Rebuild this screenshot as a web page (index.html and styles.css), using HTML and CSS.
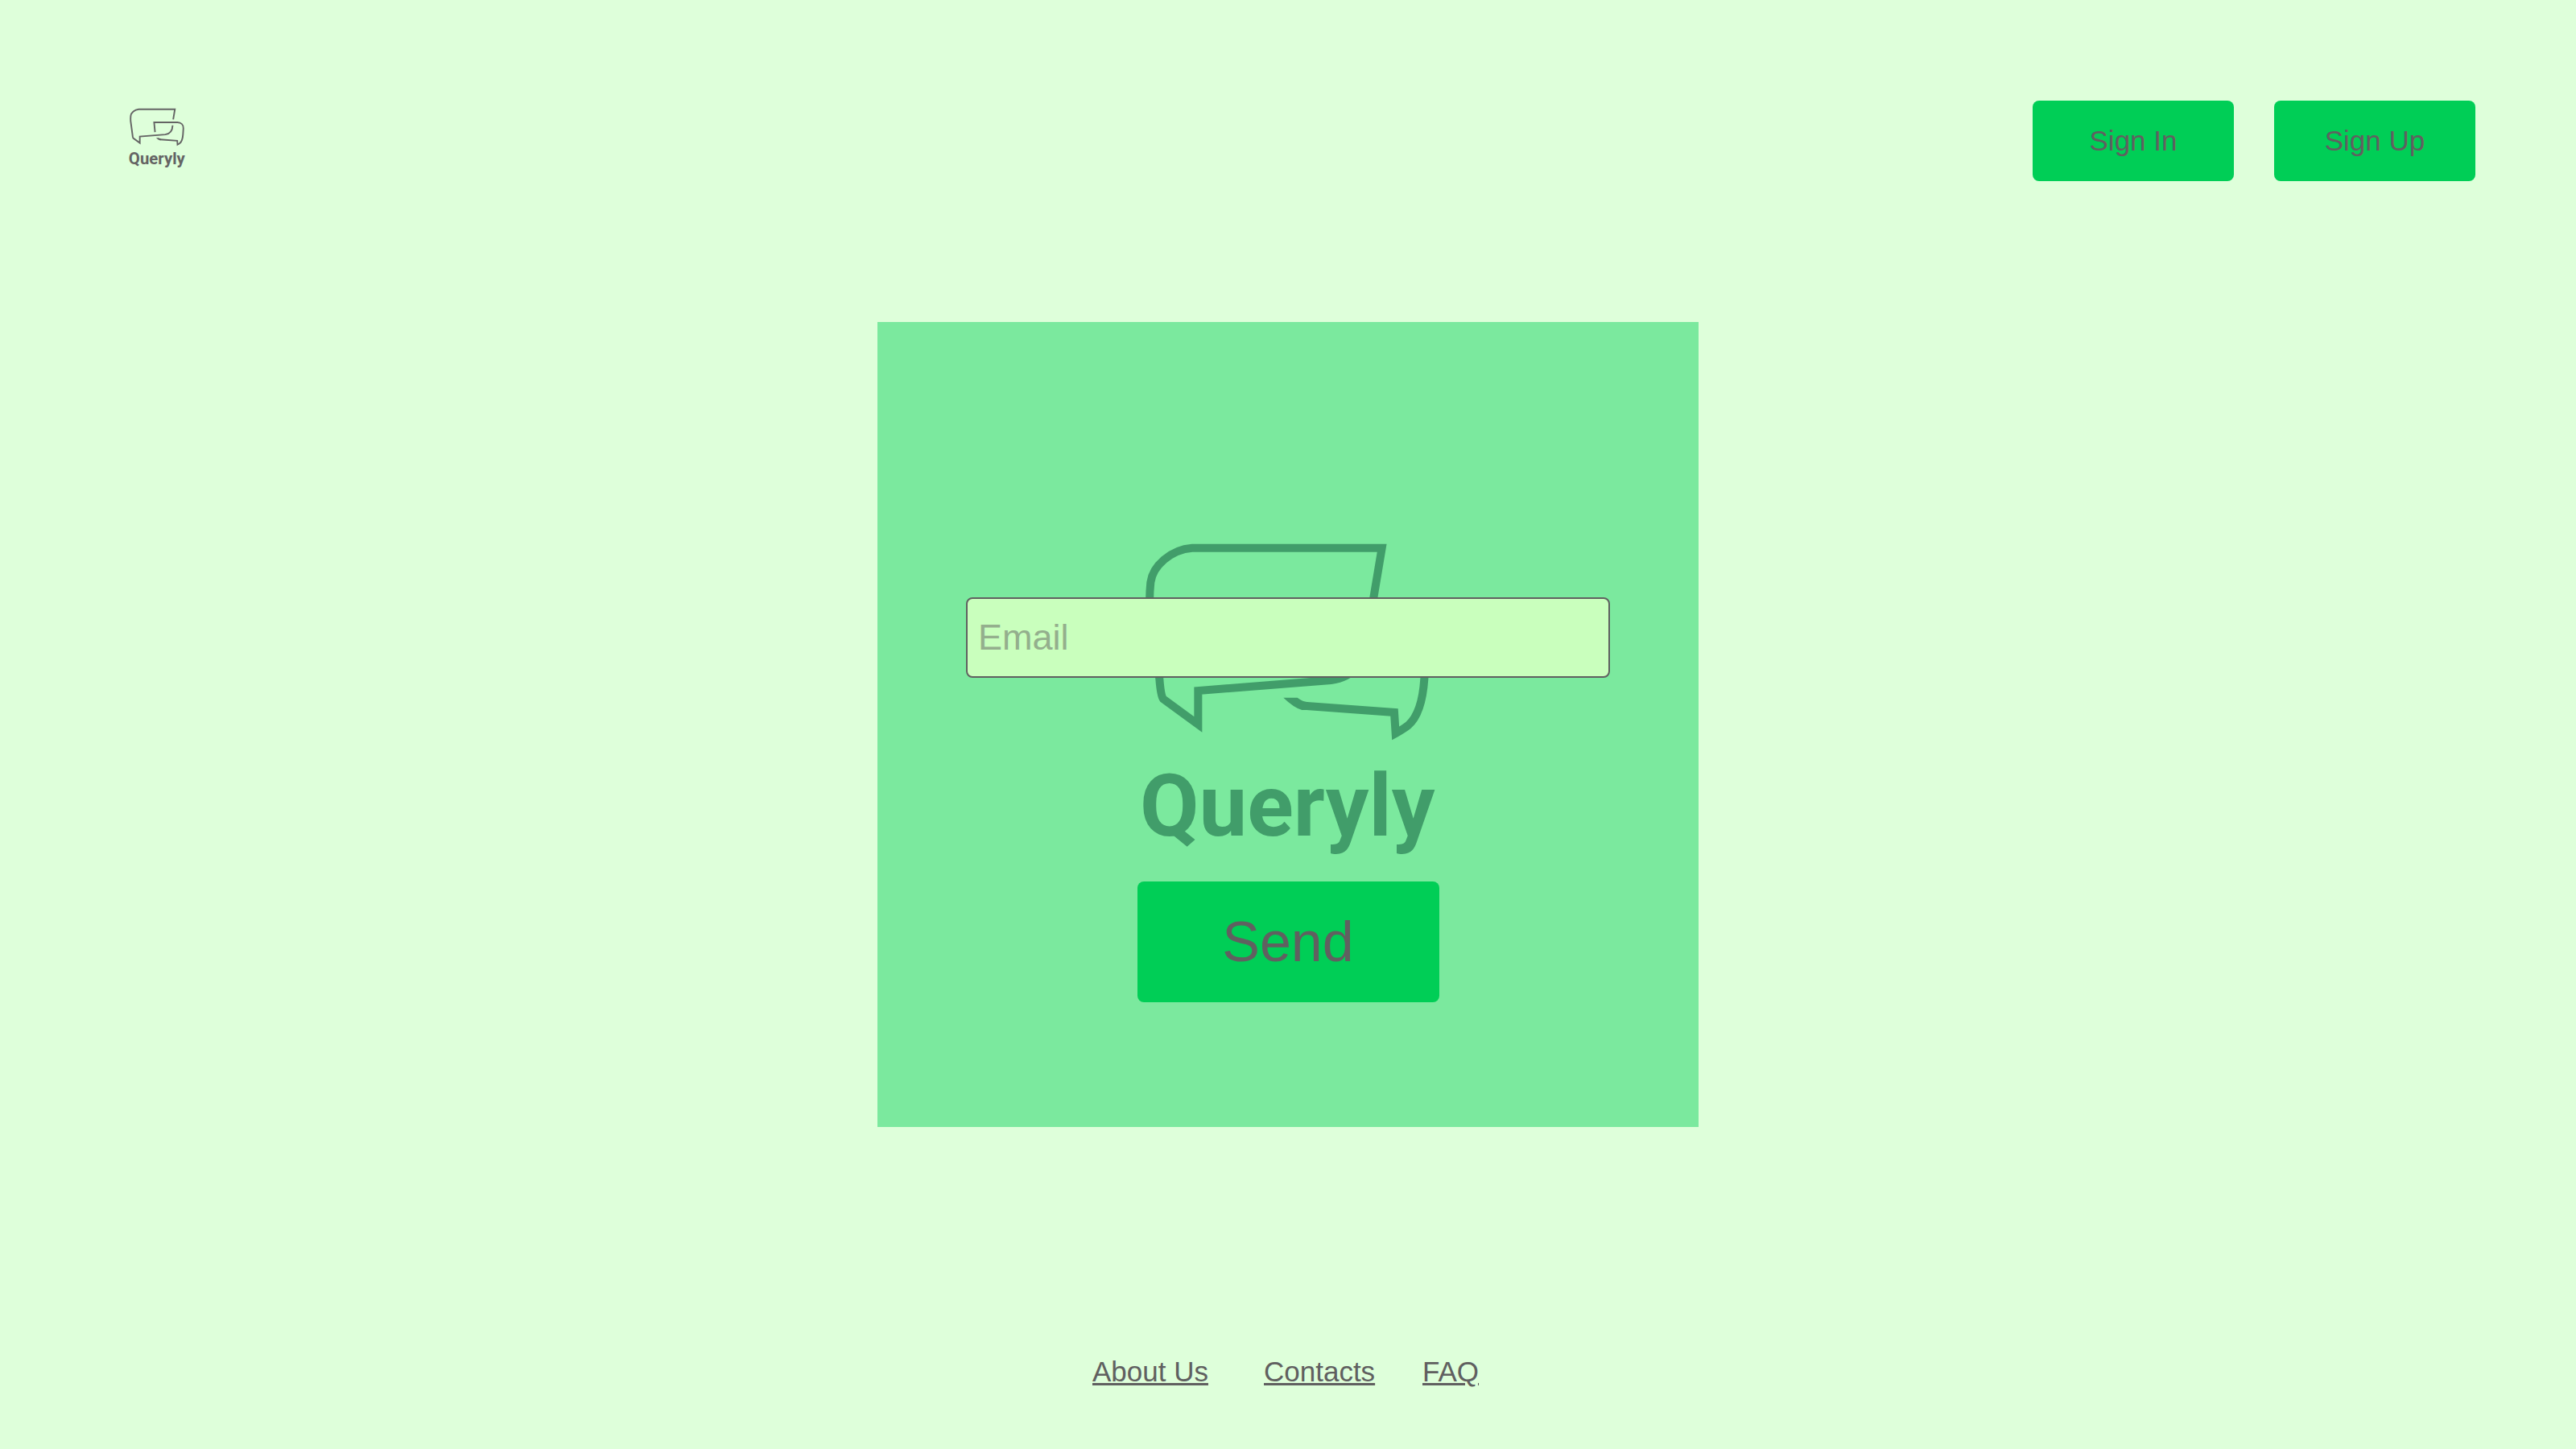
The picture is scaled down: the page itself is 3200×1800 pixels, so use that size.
FILE: index.html
```html
<!DOCTYPE html>
<html lang="en">
<head>
<meta charset="utf-8">
<meta name="viewport" content="width=device-width, initial-scale=1">
<title>Queryly</title>
<link rel="stylesheet" href="styles.css">
</head>
<body>
<header class="header">
  <a class="brand" href="#" aria-label="Queryly home">
    <svg class="logo" viewBox="0 0 1320 1320" aria-hidden="true">
      <g class="logo-lines">
        <path d="M977 319L1010 122H303C222 128 156 190 148 250Q142 310 146 350L181 610C184 650 187 673 195 685L325 780V654L820 615C900 605 962 545 966 435"/>
        <path d="M622 567L604 377H1060C1130 382 1180 425 1175 495L1168 610C1162 700 1140 755 1108 783Q1090 797 1061 813L1056 735L720 710"/>
      </g>
      <path class="logo-tip" d="M643 680H695Q715 695 735 697V726H712Q680 716 643 680Z"/>
      <text class="logo-name" x="108" y="1193">Queryly</text>
    </svg>
  </a>
  <nav class="account">
    <button class="button" type="button">Sign In</button>
    <button class="button" type="button">Sign Up</button>
  </nav>
</header>
<main class="card">
  <svg class="logo card-logo" viewBox="0 0 1320 1320" aria-hidden="true">
    <g class="logo-lines">
      <path d="M977 319L1010 122H303C222 128 156 190 148 250Q142 310 146 350L181 610C184 650 187 673 195 685L325 780V654L820 615C900 605 962 545 966 435"/>
      <path d="M622 567L604 377H1060C1130 382 1180 425 1175 495L1168 610C1162 700 1140 755 1108 783Q1090 797 1061 813L1056 735L720 710"/>
    </g>
    <path class="logo-tip" d="M643 680H695Q715 695 735 697V726H712Q680 716 643 680Z"/>
    <text class="logo-name" x="108" y="1193">Queryly</text>
  </svg>
  <form class="form">
    <input class="email" type="email" name="email" placeholder="Email" aria-label="Email">
    <button class="button send" type="button">Send</button>
  </form>
</main>
<footer class="footer">
  <nav class="links">
    <a href="#">About Us</a>
    <a href="#">Contacts</a>
    <a href="#">FAQ</a>
  </nav>
</footer>
</body>
</html>
```
FILE: styles.css
```css
* {
  box-sizing: border-box;
}

body {
  margin: 0;
  min-height: 100vh;
  display: grid;
  grid-template-rows: 1fr auto 1fr;
  background: #deffda;
  color: #606060;
  font-family: "Liberation Sans", Arial, sans-serif;
  font-size: 35px;
  line-height: 40px;
}

.header {
  display: flex;
  justify-content: space-between;
  align-items: flex-start;
  padding: 125px 125px 0 153px;
}

.brand {
  display: flex;
  padding-top: 3px;
  color: #646464;
}

.logo {
  display: block;
  width: 84px;
  height: 84px;
}

.logo-lines {
  fill: none;
  stroke: currentColor;
  stroke-width: 30;
}

.logo-tip {
  fill: currentColor;
}

.logo-name {
  fill: currentColor;
  font-family: Roboto, sans-serif;
  font-size: 320px;
  font-weight: 700;
}

.account {
  display: flex;
  gap: 50px;
}

.button {
  width: 250px;
  height: 100px;
  padding: 0;
  border: 0;
  border-radius: 8px;
  background: #00ce56;
  color: inherit;
  font: inherit;
  cursor: pointer;
}

.card {
  position: relative;
  justify-self: center;
  width: 1020px;
  max-width: 100%;
  padding: 342px 110px 155px;
  background: #7be99e;
}

.card-logo {
  position: absolute;
  top: 240px;
  left: calc(50% - 220px);
  width: 440px;
  height: 440px;
  color: #419d6a;
}

.form {
  position: relative;
  display: flex;
  flex-direction: column;
  align-items: center;
  gap: 253px;
}

.email {
  width: 100%;
  height: 100px;
  padding: 0 13px;
  border: 2px solid #606060;
  border-radius: 8px;
  background: #c9ffbd;
  color: inherit;
  font: inherit;
  font-size: 45px;
}

.email::placeholder {
  color: #94af8d;
}

.send {
  width: 375px;
  height: 150px;
  font-size: 70px;
}

.footer {
  display: flex;
  justify-content: center;
  align-items: flex-end;
  padding-bottom: 76px;
}

.links {
  display: grid;
  grid-template-columns: 213px 197px 76px;
}

.links a {
  color: inherit;
}
```
